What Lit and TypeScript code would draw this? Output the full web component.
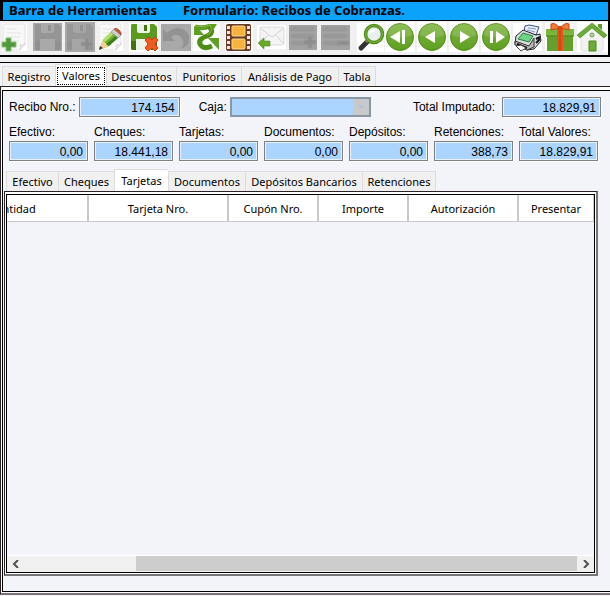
import { LitElement, html, svg, css, SVGTemplateResult } from "lit";
import { customElement, property, query } from "lit/decorators.js";
import { classMap } from "lit/directives/class-map.js";
import { styleMap } from "lit/directives/style-map.js";

interface Tool {
  label: string;
  disabled?: boolean;
  art: SVGTemplateResult;
}

interface Tab {
  label: string;
  width: number;
}

const page = svg`
  <rect x="2" y="2" width="25" height="28" fill="#fff"/>
  <path d="M5 3H25V24L20 29H5Q3 29 3 27V5Q3 3 5 3Z" fill="#f8f8f8" stroke="#e2e2e2"/>
  <path d="M20 29Q22 25 20 24Q24 25 26 22" fill="#eee" stroke="#d4d4d4"/>
  <path d="M7 8H17M7 12H21M7 16H20M12 20H19" stroke="#e3e3e3"/>`;

const disc = (glyph: SVGTemplateResult) => svg`
  <rect x="1" y="1" width="30" height="30" fill="#fff"/>
  <circle cx="16" cy="16" r="13.5" fill="url(#green)" stroke="#4f8d17"/>
  <path d="M4 14A12 12 0 0 1 28 14Q16 19 4 14Z" fill="#fff" opacity=".13"/>
  ${glyph}`;

const floppy = (body: string, shade: string, label: string) => svg`
  <path d="M4 3H26L29 6V27Q29 29 27 29H5Q3 29 3 27V5Q3 3 4 3Z" fill="${body}"/>
  <path d="M3 20H29V27Q29 29 27 29H5Q3 29 3 27Z" fill="${shade}"/>
  <path d="M9 3H22V10Q22 12 20 12H11Q9 12 9 10Z" fill="${label}"/>
  <rect x="16" y="4" width="3" height="6" fill="${shade}"/>
  <path d="M8 18H23V29H8Z" fill="${label}"/>`;

const tools: Tool[] = [
  {
    label: "Nuevo",
    art: svg`${page}<path d="M6 17H11V21H16V26H11V30H6V26H2V21H6Z" fill="#4f9a3a" stroke="#8cc07b"/>`,
  },
  {
    label: "Guardar",
    disabled: true,
    art: svg`<rect x="1" y="2" width="29" height="28" fill="#a8a8a8"/>${floppy("#959595", "#909090", "#a9a9a9")}`,
  },
  {
    label: "Guardar y agregar",
    disabled: true,
    art: svg`<rect x="1" y="1" width="30" height="30" fill="#a8a8a8"/>${floppy("#979797", "#929292", "#a6a6a6")}
      <path d="M21 17H25V21H29V25H25V29H21V25H17V21H21Z" fill="#8c8c8c" stroke="#9c9c9c"/>`,
  },
  {
    label: "Modificar",
    art: svg`${page}
      <path d="M3 29L7 19L17 9L24 15L13 25Z" fill="#6fb02f"/>
      <path d="M7 19L17 9L20 11L9 21Z" fill="#b4de6a"/>
      <path d="M10 23L22 13L24 15L13 25Z" fill="#3f7d1d"/>
      <path d="M3 29L7 19Q8 22 10 22Q10 25 13 25Z" fill="#f3cf92"/><path d="M3 29L4 25L7 27Z" fill="#333"/>
      <path d="M15 11L18 8L25 14L22 17Z" fill="#cfcfcf" stroke="#888" stroke-width=".6"/>
      <path d="M18 8Q20 6 23 9Q26 12 25 14Z" fill="#cf5a33" stroke="#8f3a20" stroke-width=".6"/>`,
  },
  {
    label: "Eliminar",
    art: svg`<rect x="1" y="2" width="29" height="29" fill="#fff"/>${floppy("#5b9a1e", "#41730f", "#eef3ea")}
      <path d="M17 19L20 16L24 19L27 16L30 19L27 23L30 27L27 30L24 27L20 30L17 27L20 23Z" fill="#ee5a20" stroke="#c53f0d"/>`,
  },
  {
    label: "Deshacer",
    disabled: true,
    art: svg`<rect x="1" y="3" width="30" height="27" fill="#a8a8a8"/>
      <path d="M3 8V20H15L11 16Q16 11 21 16Q26 22 21 28Q31 24 29 15Q26 7 17 7Q11 8 7 12Z" fill="#939393"/>`,
  },
  {
    label: "Actualizar",
    art: svg`<rect x="1" y="2" width="27" height="28" fill="#fff"/>
      <path d="M3 6Q11 8 18 5" stroke="#5f9f22" stroke-width="5"/>
      <path d="M2 5V14H12L6 7Z" fill="#5f9f22"/>
      <path d="M17 5Q23 12 15 15Q6 18 8 23Q11 29 20 25" stroke="#4f8d17" stroke-width="5"/>
      <path d="M16 3H25L22 8Z" fill="#5f9f22"/>
      <path d="M16 17H27V29Z" fill="#5f9f22"/>
      <path d="M4 5Q11 7 18 4Q22 11 15 14" stroke="#85bb48"/>`,
  },
  {
    label: "Multimedia",
    art: svg`<rect x="1" y="2" width="28" height="29" fill="#fff"/>
      <rect x="2" y="3" width="25" height="27" rx="2" fill="#6a3a28"/>
      <path d="M4.500 5V30M24.500 5V30" stroke="#f3e6dc" stroke-width="3" stroke-dasharray="3 2"/>
      <rect x="8" y="5" width="13" height="10" rx="1" fill="#f5b23c" stroke="#ffd98c"/>
      <rect x="8" y="18" width="13" height="10" rx="1" fill="#f5b23c" stroke="#ffd98c"/>`,
  },
  {
    label: "Enviar",
    art: svg`<rect x="1" y="4" width="29" height="24" fill="#fff"/>
      <rect x="4" y="6" width="24" height="18" rx="2" fill="#f4f4f4" stroke="#dcdcdc"/>
      <path d="M4 7L16 16L28 7M4 23L12 14M28 23L20 14" fill="none" stroke="#d2d2d2"/>
      <path d="M2 22L8 17V20H14V25H8V28Z" fill="#6aa928" stroke="#4f8d17" stroke-width=".6"/>`,
  },
  {
    label: "Agregar fila",
    disabled: true,
    art: svg`<rect x="1" y="4" width="28" height="25" fill="#a2a2a2"/>
      <path d="M5 8H24M5 15H24M5 22H24" stroke="#999" stroke-width="5" stroke-linecap="round"/>
      <path d="M20 15H24V19H28V23H24V27H20V23H16V19H20Z" fill="#8d8d8d" stroke="#989898"/>`,
  },
  {
    label: "Quitar fila",
    disabled: true,
    art: svg`<rect x="1" y="4" width="29" height="25" fill="#a2a2a2"/>
      <path d="M5 8H25M5 15H25M5 22H25" stroke="#999" stroke-width="5" stroke-linecap="round"/>
      <rect x="17" y="20" width="12" height="4" fill="#8d8d8d" stroke="#989898"/>`,
  },
  {
    label: "Buscar",
    art: svg`<rect x="5" y="2" width="27" height="29" fill="#fff"/>
      <path d="M9 27L16 20" stroke="#333" stroke-width="5" stroke-linecap="round"/>
      <path d="M14 21L17 18" stroke="#888" stroke-width="3"/>
      <circle cx="22" cy="13" r="8.500" fill="#e9efee" stroke="#4f8d17" stroke-width="3.500"/>
      <circle cx="22" cy="13" r="8.500" fill="none" stroke="#79b337" stroke-width="1.200"/>
      <path d="M17 13Q18 7 25 9Z" fill="#fff"/>`,
  },
  { label: "Primero", art: disc(svg`<path d="M6 16L16 10V22Z" fill="#fff"/><path d="M18 9H21V23H18Z" fill="#fff"/>`) },
  { label: "Anterior", art: disc(svg`<path d="M9 16L19 10V22Z" fill="#fff"/>`) },
  { label: "Siguiente", art: disc(svg`<path d="M12 10L22 16L12 22Z" fill="#fff"/>`) },
  { label: "Último", art: disc(svg`<path d="M16 10L25 16L16 22Z" fill="#fff"/><path d="M10 10H13V22H10Z" fill="#fff"/>`) },
  {
    label: "Imprimir",
    art: svg`<rect x="1" y="2" width="29" height="28" fill="#fff"/>
      <path d="M13 5L17 4L27 6L24 14L12 11Z" fill="#eaf0fb" stroke="#3d4a88"/>
      <path d="M16 7L24 8M15 9L23 11" stroke="#8894c8"/>
      <path d="M4 15L11 9L24 14L28 13L29 20L22 28L15 29L3 23Z" fill="#dedede" stroke="#222"/>
      <path d="M6 18L11 12L21 15L17 21Z" fill="#6fd48a" stroke="#2b7d43"/>
      <path d="M3 20L17 25L22 17V26L15 29L3 24Z" fill="#b9b9b9" stroke="#333"/>
      <path d="M5 23L15 27M24 18L28 16M24 22L28 18" stroke="#111" stroke-width="2"/>
      <path d="M4 25L9 24L14 27L9 30Z" fill="#fff" stroke="#444"/>`,
  },
  {
    label: "Promociones",
    art: svg`<rect x="1" y="2" width="28" height="29" fill="#fff"/>
      <path d="M3 14H29V30H3Z" fill="#64a02b"/><path d="M2 8H30V15H2Z" fill="#7ab63e"/>
      <path d="M2 15H30" stroke="#47801a"/>
      <path d="M13 8H19V30H13Z" fill="#e8561d"/><path d="M16 9V30" stroke="#b93a0c"/>
      <path d="M16 7Q11 1 7 3V9L16 7Q21 1 25 3V9Z" fill="#ef7d3a" stroke="#c9420f"/>
      <path d="M14 5H18V9H14Z" fill="#d9480f"/>`,
  },
  {
    label: "Inicio",
    art: svg`<rect x="1" y="1" width="31" height="30" fill="#fff"/>
      <path d="M5 14L16 5L27 14V28Q27 30 25 30H7Q5 30 5 28Z" fill="#f1f2f1" stroke="#dfe0df"/>
      <path d="M22 3H26V9L22 6Z" fill="#5b9a2c"/>
      <path d="M1 14L16 2L31 14L28 17L16 7L4 17Z" fill="#6cab38" stroke="#4c8b1c" stroke-width=".6"/>
      <circle cx="16" cy="14" r="2" fill="#b9cfae" stroke="#6f9f55"/>
      <path d="M13 20H20V30H13Z" fill="#6cab38" stroke="#4c8b1c"/>`,
  },
];

const mainTabs: Tab[] = [
  { label: "Registro", width: 53 },
  { label: "Valores", width: 51 },
  { label: "Descuentos", width: 70 },
  { label: "Punitorios", width: 65 },
  { label: "Análisis de Pago", width: 97 },
  { label: "Tabla", width: 38 },
];

const valueTabs: Tab[] = [
  { label: "Efectivo", width: 52 },
  { label: "Cheques", width: 56 },
  { label: "Tarjetas", width: 54 },
  { label: "Documentos", width: 77 },
  { label: "Depósitos Bancarios", width: 117 },
  { label: "Retenciones", width: 74 },
];

const amounts = [
  ["Efectivo:", "0,00"],
  ["Cheques:", "18.441,18"],
  ["Tarjetas:", "0,00"],
  ["Documentos:", "0,00"],
  ["Depósitos:", "0,00"],
  ["Retenciones:", "388,73"],
  ["Total Valores:", "18.829,91"],
];

const columns: Tab[] = [
  { label: "Entidad", width: 144 },
  { label: "Tarjeta Nro.", width: 140 },
  { label: "Cupón Nro.", width: 90 },
  { label: "Importe", width: 90 },
  { label: "Autorización", width: 110 },
  { label: "Presentar", width: 75 },
];

@customElement("tool-bar")
export class ToolBar extends LitElement {
  static styles = css`
    :host {
      display: block;
      background: #f0f0f0;
      border: solid #000;
      border-width: 2px 2px 2px 0;
    }
    .title {
      display: flex;
      gap: 26px;
      height: 18px;
      margin: 0;
      padding-left: 6px;
      border-left: 3px solid #000;
      border-bottom: 1px solid #000;
      background: #0aa2fb;
      font: bold 13px/17px "Noto Sans", sans-serif;
      white-space: nowrap;
    }
    .tools {
      display: flex;
      height: 34px;
      overflow: hidden;
    }
    .tool {
      flex: none;
      width: 32px;
      height: 34px;
      padding: 0;
      border: 0;
      background: none;
    }
    .art {
      display: block;
      width: 32px;
      height: 34px;
    }
  `;

  render() {
    return html`
      <h1 class="title"><span>Barra de Herramientas</span><span>Formulario: Recibos de Cobranzas.</span></h1>
      <div class="tools" role="toolbar">
        ${tools.map(
          (t) => html`<button class="tool" aria-label=${t.label} ?disabled=${t.disabled}>
            <svg class="art" viewBox="0 0 32 34" fill="none">
              <defs>
                <linearGradient id="green" x1="0" y1="0" x2="0" y2="1">
                  <stop offset="0" stop-color="#7fb53e" />
                  <stop offset="1" stop-color="#5f9f22" />
                </linearGradient>
              </defs>
              ${t.art}
            </svg>
          </button>`,
        )}
      </div>
    `;
  }
}

@customElement("tab-strip")
export class TabStrip extends LitElement {
  @property({ attribute: false }) tabs: Tab[] = [];
  @property() active = "";
  @property({ type: Boolean }) focused = false;

  static styles = css`
    :host {
      display: block;
    }
    .strip {
      display: flex;
      align-items: flex-end;
      height: 22px;
    }
    .tab {
      box-sizing: border-box;
      flex: none;
      height: 20px;
      padding: 0;
      border: 1px solid #dcdcdc;
      border-width: 1px 0 0 1px;
      background: #f0f0f0;
      color: #000;
      font: 11px/20px "Noto Sans", sans-serif;
      white-space: nowrap;
    }
    .tab:last-child {
      border-right-width: 1px;
    }
    .active {
      height: 22px;
      padding: 1px;
      background: #fff;
      line-height: 18px;
    }
    .text {
      display: block;
    }
    .focused .text {
      outline: 1px dotted #000;
      outline-offset: -1px;
    }
  `;

  render() {
    return html`<div class="strip" role="tablist">
      ${this.tabs.map((t) => {
        const active = t.label === this.active;
        return html`<button
          role="tab"
          aria-selected=${active ? "true" : "false"}
          class=${classMap({ tab: true, active, focused: active && this.focused })}
          style=${styleMap({ width: `${t.width}px` })}
        ><span class="text">${t.label}</span></button>`;
      })}
    </div>`;
  }
}

@customElement("card-table")
export class CardTable extends LitElement {
  @query(".view") view!: HTMLElement;

  static styles = css`
    :host {
      display: flex;
      flex-direction: column;
      min-height: 0;
    }
    .view {
      flex: 1;
      overflow: hidden;
    }
    .table {
      border-collapse: separate;
      border-spacing: 0;
      table-layout: fixed;
      width: max-content;
    }
    .head {
      box-sizing: border-box;
      height: 27px;
      padding: 1px 0 0;
      border: solid #c8c8c8;
      border-width: 0 2px 1px 0;
      background: #fff;
      font: 11px/25px "Noto Sans", sans-serif;
      text-align: center;
    }
    .head:last-child {
      border-right-width: 1px;
    }
    .scroll {
      display: grid;
      grid-template-columns: 17px 112fr 441fr 17px;
      height: 16px;
      border-top: 1px solid #fff;
      background: #f0f0f0;
    }
    .step {
      display: grid;
      place-items: center;
      padding: 0;
      border: 0;
      background: none;
    }
    .thumb {
      grid-column: 3;
      height: 15px;
      background: #cdcdcd;
    }
    .arrow {
      width: 8px;
      height: 8px;
    }
  `;

  firstUpdated() {
    this.view.scrollLeft = 62;
  }

  render() {
    return html`
      <div class="view">
        <table class="table">
          <colgroup>
            ${columns.map((c) => html`<col style=${styleMap({ width: `${c.width}px` })} />`)}
          </colgroup>
          <thead>
            <tr>
              ${columns.map(
                (c) => html`<th class="head" scope="col" style=${styleMap({ minWidth: `${c.width}px` })}>${c.label}</th>`,
              )}
            </tr>
          </thead>
        </table>
      </div>
      <div class="scroll">
        <button class="step" aria-label="Desplazar a la izquierda">
          <svg class="arrow" viewBox="0 0 8 8"><path d="M6 0L2 4L6 8" fill="none" stroke="#505050" stroke-width="2" /></svg>
        </button>
        <div class="thumb"></div>
        <button class="step" aria-label="Desplazar a la derecha">
          <svg class="arrow" viewBox="0 0 8 8"><path d="M2 0L6 4L2 8" fill="none" stroke="#505050" stroke-width="2" /></svg>
        </button>
      </div>
    `;
  }
}

@customElement("app-root")
export class AppRoot extends LitElement {
  static styles = css`
    :host {
      display: flex;
      flex-direction: column;
      min-height: 100vh;
      overflow: hidden;
      background: #f3f4f9;
      color: #000;
      font: 12px/16px "Liberation Sans", Arial, sans-serif;
    }
    .gap {
      height: 5px;
      border-bottom: 1px solid #000;
      background: #f3f0f3;
    }
    .main-tabs {
      padding: 1px 0 0 2px;
    }
    .outer {
      flex: 1;
      display: flex;
      flex-direction: column;
      margin-bottom: 1px;
      border: solid #2b2228;
      border-width: 1px 0 2px 1px;
      border-bottom-color: #77747a;
      background: #fff;
      padding: 3px 0 1px 1px;
    }
    .panel {
      flex: 1;
      display: flex;
      flex-direction: column;
      border: solid #000;
      border-width: 1px 0 1px 1px;
      background: #f3f4f9;
      padding: 6px 12px 15px 2px;
    }
    .row {
      display: flex;
      align-items: center;
      padding-left: 4px;
    }
    .item {
      display: flex;
      align-items: center;
      gap: 3px;
      white-space: nowrap;
    }
    .end {
      margin-left: auto;
      margin-right: -3px;
      gap: 7px;
    }
    .first {
      margin-right: 19px;
    }
    .field {
      box-sizing: border-box;
      height: 20px;
      margin: 0;
      padding: 1px 4px 0 4px;
      border: 1px solid #808080;
      border-radius: 0;
      box-shadow: inset 0 0 0 1px #e8f0fa, 1px 1px 0 #fff;
      background: #abd4ff;
      color: #000;
      font: 12px/16px "Liberation Sans", Arial, sans-serif;
      text-align: right;
    }
    .number {
      width: 101px;
    }
    .total {
      width: 99px;
    }
    .combo {
      display: grid;
      width: 141px;
    }
    .select,
    .drop {
      grid-area: 1 / 1;
    }
    .select {
      appearance: none;
      width: 100%;
      border: 2px solid #8a97a6;
      box-shadow: none;
      opacity: 1;
    }
    .drop {
      z-index: 1;
      justify-self: end;
      align-self: center;
      width: 16px;
      height: 16px;
      margin-right: 2px;
      background: #c9c9c9;
      pointer-events: none;
    }
    .amounts {
      display: grid;
      grid-template-columns: repeat(7, minmax(0, 1fr));
      gap: 6px;
      margin-top: 7px;
      padding-left: 4px;
    }
    .amount {
      display: flex;
      flex-direction: column;
      gap: 1px;
      white-space: nowrap;
    }
    .amount .field {
      width: 100%;
    }
    .value-tabs {
      margin-top: 8px;
      padding-left: 1px;
    }
    .inner {
      flex: 1;
      display: flex;
      flex-direction: column;
      border: 1px solid #2b2228;
      border-right: 2px solid #77747a;
      border-bottom: 2px solid #77747a;
      background: #fff;
      padding: 2px 1px 1px 1px;
      margin-left: -1px;
    }
    .table {
      flex: 1;
      border: 1px solid #000;
      background: #f3f4f9;
    }
  `;

  render() {
    return html`
      <tool-bar></tool-bar>
      <div class="gap"></div>
      <tab-strip class="main-tabs" .tabs=${mainTabs} active="Valores" focused></tab-strip>
      <div class="outer">
        <main class="panel">
          <div class="row">
            <div class="item first">
              <label for="recibo">Recibo Nro.:</label>
              <input id="recibo" class="field number" value="174.154" readonly />
            </div>
            <div class="item">
              <label for="caja">Caja:</label>
              <span class="combo">
                <select id="caja" class="field select" disabled></select>
                <svg class="drop" viewBox="0 0 16 16"><path d="M4 6H12L8 10Z" fill="#b4c4d8" /></svg>
              </span>
            </div>
            <div class="item end">
              <label for="imputado">Total Imputado:</label>
              <input id="imputado" class="field total" value="18.829,91" readonly />
            </div>
          </div>
          <div class="amounts">
            ${amounts.map(
              ([label, value], i) => html`<div class="amount">
                <label for="amount-${i}">${label}</label>
                <input id="amount-${i}" class="field" value=${value} readonly />
              </div>`,
            )}
          </div>
          <tab-strip class="value-tabs" .tabs=${valueTabs} active="Tarjetas"></tab-strip>
          <div class="inner">
            <card-table class="table"></card-table>
          </div>
        </main>
      </div>
    `;
  }
}
